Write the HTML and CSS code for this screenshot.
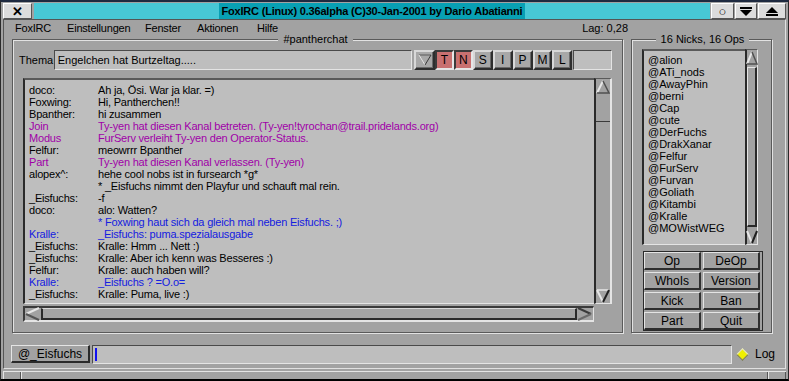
FILE: index.html
```html
<!DOCTYPE html>
<html lang="de">
<head>
    <meta charset="UTF-8">
    <title>FoxIRC</title>
    <link rel="stylesheet" href="styles.css">
</head>
<body>
<div class="window">
    <div class="titlebar">
        <span class="tb-btn close">✕</span>
        <div class="tb-title"><span>FoxIRC (Linux) 0.36alpha (C)30-Jan-2001 by Dario Abatianni</span></div>
        <span class="tb-btn circle">○</span>
        <span class="tb-btn mini">
            <svg width="12" height="9" viewBox="0 0 12 9"><rect x="0" y="0" width="12" height="2" fill="#000"/><polygon points="0,3 12,3 6,9" fill="#000"/></svg>
        </span>
        <span class="tb-btn maxi">
            <svg width="12" height="9" viewBox="0 0 12 9"><polygon points="6,0 12,6 0,6" fill="#000"/><rect x="0" y="7" width="12" height="2" fill="#000"/></svg>
        </span>
    </div>

    <div class="client">
        <div class="menubar">
            <span class="menu m1">FoxIRC</span>
            <span class="menu m2">Einstellungen</span>
            <span class="menu m3">Fenster</span>
            <span class="menu m4">Aktionen</span>
            <span class="menu m5">Hilfe</span>
            <span class="lag">Lag: 0,28</span>
        </div>

        <div class="main">
            <fieldset class="group channel">
                <legend>#pantherchat</legend>
                <div class="topic-row">
                    <span class="topic-label">Thema</span>
                    <div class="field topic">Engelchen hat Burtzeltag.....</div>
                    <span class="mode drop">
                        <svg width="14" height="12" viewBox="0 0 14 12"><polyline points="1,1 13,1" stroke="#5a5a5a" fill="none"/><polyline points="1,1 7,11" stroke="#e4e4e4" fill="none"/><polyline points="13,1 7,11" stroke="#3a3a3a" fill="none"/></svg>
                    </span>
                    <span class="mode on">T</span>
                    <span class="mode on">N</span>
                    <span class="mode">S</span>
                    <span class="mode">I</span>
                    <span class="mode">P</span>
                    <span class="mode">M</span>
                    <span class="mode">L</span>
                    <div class="field limit"></div>
                </div>

                <div class="chat">
                    <div class="log">
                        <span>doco:</span><span>Ah ja, Ösi. War ja klar. =)</span>
                        <span>Foxwing:</span><span>Hi, Pantherchen!!</span>
                        <span>Bpanther:</span><span>hi zusammen</span>
                        <span class="sys">Join</span><span class="sys">Ty-yen hat diesen Kanal betreten. (Ty-yen!tyrochan@trail.pridelands.org)</span>
                        <span class="sys">Modus</span><span class="sys">FurServ verleiht Ty-yen den Operator-Status.</span>
                        <span>Felfur:</span><span>meowrrr Bpanther</span>
                        <span class="sys">Part</span><span class="sys">Ty-yen hat diesen Kanal verlassen. (Ty-yen)</span>
                        <span>alopex^:</span><span>hehe cool nobs ist in fursearch *g*</span>
                        <span></span><span>* _Eisfuchs nimmt den Playfur und schauft mal rein.</span>
                        <span>_Eisfuchs:</span><span>-f</span>
                        <span>doco:</span><span>alo: Watten?</span>
                        <span></span><span class="me">* Foxwing haut sich da gleich mal neben Eisfuchs. ;)</span>
                        <span class="me">Kralle:</span><span class="me">_Eisfuchs: puma.spezialausgabe</span>
                        <span>_Eisfuchs:</span><span>Kralle: Hmm ... Nett :)</span>
                        <span>_Eisfuchs:</span><span>Kralle: Aber ich kenn was Besseres :)</span>
                        <span>Felfur:</span><span>Kralle: auch haben will?</span>
                        <span class="me">Kralle:</span><span class="me">_Eisfuchs ? =O.o=</span>
                        <span>_Eisfuchs:</span><span>Kralle: Puma, live :)</span>
                    </div>
                    <div class="vscroll">
                        <span class="arrow">
                            <svg width="14" height="14" viewBox="0 0 14 14"><polygon points="7,1 13,13 1,13" fill="#a2a2a2"/><polyline points="1,13 7,1" stroke="#e6e6e6" stroke-width="2" fill="none"/><polyline points="7,1 13,13 1,13" stroke="#505050" stroke-width="1.5" fill="none"/></svg>
                        </span>
                        <span class="thumb big"></span>
                        <span class="track"></span>
                        <span class="arrow">
                            <svg width="14" height="14" viewBox="0 0 14 14"><polygon points="1,1 13,1 7,13" fill="#a2a2a2"/><polyline points="1,1 13,1" stroke="#e6e6e6" stroke-width="1.5" fill="none"/><polyline points="1,1 7,13" stroke="#e6e6e6" stroke-width="2" fill="none"/><polyline points="13,1 7,13" stroke="#202020" stroke-width="2" fill="none"/></svg>
                        </span>
                    </div>
                    <div class="hscroll">
                        <span class="harrow">
                            <svg width="15" height="14" viewBox="0 0 15 14"><polygon points="1,7 14,1 14,13" fill="#a2a2a2"/><polyline points="14,1 1,7" stroke="#e6e6e6" stroke-width="2" fill="none"/><polyline points="1,7 14,13" stroke="#555" stroke-width="2" fill="none"/></svg>
                        </span>
                        <span class="hthumb"></span>
                        <span class="harrow">
                            <svg width="15" height="14" viewBox="0 0 15 14"><polygon points="1,1 14,7 1,13" fill="#a2a2a2"/><polyline points="1,1 14,7" stroke="#3a3a3a" stroke-width="2" fill="none"/><polyline points="14,7 1,13" stroke="#6a6a6a" stroke-width="2" fill="none"/></svg>
                        </span>
                    </div>
                </div>
            </fieldset>

            <fieldset class="group nicks">
                <legend>16 Nicks, 16 Ops</legend>
                <div class="nickbox">
                    <div class="nicklist">
                        <div>@alion</div>
                        <div>@ATi_nods</div>
                        <div>@AwayPhin</div>
                        <div>@berni</div>
                        <div>@Cap</div>
                        <div>@cute</div>
                        <div>@DerFuchs</div>
                        <div>@DrakXanar</div>
                        <div>@Felfur</div>
                        <div>@FurServ</div>
                        <div>@Furvan</div>
                        <div>@Goliath</div>
                        <div>@Kitambi</div>
                        <div>@Kralle</div>
                        <div>@MOWistWEG</div>
                    </div>
                    <div class="vscroll small">
                        <span class="arrow">
                            <svg width="12" height="14" viewBox="0 0 12 14"><polygon points="6,1 11,13 1,13" fill="#a2a2a2"/><polyline points="1,13 6,1" stroke="#e6e6e6" stroke-width="2" fill="none"/><polyline points="6,1 11,13 1,13" stroke="#505050" stroke-width="1.5" fill="none"/></svg>
                        </span>
                        <span class="thumb tall"></span>
                        <span class="arrow">
                            <svg width="12" height="14" viewBox="0 0 12 14"><polygon points="1,1 11,1 6,13" fill="#a2a2a2"/><polyline points="1,1 6,13" stroke="#e6e6e6" stroke-width="2" fill="none"/><polyline points="11,1 6,13" stroke="#202020" stroke-width="2" fill="none"/></svg>
                        </span>
                    </div>
                </div>
                <div class="actions">
                    <span class="btn">Op</span>
                    <span class="btn">DeOp</span>
                    <span class="btn">WhoIs</span>
                    <span class="btn">Version</span>
                    <span class="btn">Kick</span>
                    <span class="btn">Ban</span>
                    <span class="btn">Part</span>
                    <span class="btn">Quit</span>
                </div>
            </fieldset>
        </div>

        <div class="inputrow">
            <span class="btn nickbtn">@_Eisfuchs</span>
            <div class="field input"><span class="caret"></span></div>
            <span class="log-toggle"><span class="led"></span>Log</span>
        </div>
    </div>
    <div class="statusbar">
        <span class="grip"></span>
        <span class="grip-mid"></span>
        <span class="grip"></span>
    </div>
</div>
</body>
</html>
```

FILE: styles.css
```css
body {
    margin: 0;
    background: #000;
    font-family: "Liberation Sans", Arial, sans-serif;
    font-size: 11px;
    color: #000;
}
.window {
    width: 789px;
    height: 381px;
    box-sizing: border-box;
    background: #a2a2a2;
    border-top: 2px solid #1e2a40;
    border-left: 1px solid #2a2a2a;
    border-right: 1px solid #2a2a2a;
    border-bottom: 2px solid #000;
    display: flex;
    flex-direction: column;
    overflow: hidden;
}

/* title bar */
.titlebar {
    display: flex;
    height: 16px;
    margin: 1px 2px 0 2px;
    gap: 1px;
}
.tb-btn {
    flex-shrink: 0;
    background: #dcdcdc;
    border: 1px solid #fff;
    border-right-color: #555;
    border-bottom-color: #555;
    box-sizing: border-box;
    height: 16px;
    display: flex;
    align-items: center;
    justify-content: center;
    font-size: 13px;
    font-weight: bold;
}
.tb-btn.close { width: 29px; margin-right: 1px; }
.tb-btn.circle { width: 23px; font-size: 13px; font-weight: normal; }
.tb-btn.mini { width: 22px; }
.tb-btn.maxi { width: 28px; }
.tb-title {
    flex: 1;
    min-width: 0;
    display: flex;
    align-items: center;
    justify-content: center;
    background-color: #08a0b4;
    background-image: radial-gradient(circle, #4ccbd8 0.7px, transparent 0.8px);
    background-size: 2px 2px;
    font-weight: bold;
    font-size: 11px;
    white-space: nowrap;
}
.tb-title span {
    background: #08a0b4;
    padding: 0 3px;
    line-height: 16px;
    letter-spacing: -0.2px;
}

/* client area */
.client {
    flex: 1;
    margin: 0 2px 0 2px;
    border: 1px solid #555;
    border-bottom-color: #e0e0e0;
    border-right-color: #e0e0e0;
    display: flex;
    flex-direction: column;
    padding: 0 6px 0 8px;
}
.menubar {
    display: flex;
    height: 16px;
    align-items: center;
    padding-left: 3px;
    letter-spacing: -0.2px;
}
.m1 { width: 52px; }
.m2 { width: 78px; }
.m3 { width: 52px; }
.m4 { width: 60px; }
.lag { margin-left: auto; margin-right: 151px; letter-spacing: 0; }

.main {
    display: flex;
    gap: 8px;
    height: 300px;
    margin-top: -3px;
}
.group {
    margin: 0;
    padding: 0;
    border: 1px solid #5a5a5a;
    box-shadow: inset 1px 1px 0 #e2e2e2, 1px 1px 0 #e2e2e2;
    min-width: 0;
}
.group legend {
    margin: 0 auto;
    padding: 0 5px;
    background: #a2a2a2;
    line-height: 12px;
    font-size: 11px;
}
.channel {
    width: 611px;
    box-sizing: border-box;
    padding: 0 10px 0 6px;
}
.nicks {
    width: 141px;
    box-sizing: border-box;
    padding: 0 8px 0 10px;
}

/* topic row */
.topic-row {
    display: flex;
    align-items: center;
    height: 20px;
    margin-top: 5px;
}
.topic-label { width: 35px; }
.field {
    background: #bebebe;
    border: 1px solid #4a4a4a;
    border-right-color: #e4e4e4;
    border-bottom-color: #e4e4e4;
    box-sizing: border-box;
}
.topic {
    width: 361px;
    height: 20px;
    padding-left: 3px;
    line-height: 18px;
}
.limit {
    width: 39px;
    height: 20px;
    margin-left: 1px;
}
.mode {
    width: 20px;
    height: 20px;
    box-sizing: border-box;
    display: flex;
    align-items: center;
    justify-content: center;
    background: #a8a8a8;
    border: 2px solid #2e2e2e;
    border-top-color: #d8d8d8;
    border-left-color: #d8d8d8;
    box-shadow: inset -1px -1px 0 #6a6a6a;
    font-size: 12px;
}
.mode.drop {
    width: 21px;
    margin-left: 2px;
}
.mode.on {
    width: 19px;
    background: #c87070;
    border-color: #3a3a3a;
    border-right-color: #e6e6e6;
    border-bottom-color: #e6e6e6;
    box-shadow: none;
}

/* chat */
.chat {
    display: grid;
    grid-template-columns: 571px 18px;
    grid-template-rows: 226px 18px;
    margin: 8px 0 0 4px;
}
.log {
    background: #bebebe;
    border-top: 2px solid #5a5a5a;
    border-left: 2px solid #2a2a2a;
    border-bottom: 1px solid #e4e4e4;
    display: grid;
    grid-template-columns: 69px 1fr;
    grid-auto-rows: 12px;
    padding: 4px 0 0 4px;
    line-height: 12px;
    overflow: hidden;
    white-space: nowrap;
    letter-spacing: -0.2px;
}
.log .sys { color: #a000a8; }
.log .me { color: #1420e0; }

.vscroll {
    background: #a2a2a2;
    border-left: 2px solid #2a2a2a;
    border-right: 2px solid #e4e4e4;
    border-top: 1px solid #5a5a5a;
    border-bottom: 1px solid #e4e4e4;
    display: flex;
    flex-direction: column;
    align-items: center;
}
.vscroll .arrow { height: 15px; display: flex; align-items: center; }
.vscroll .thumb.big {
    width: 100%;
    height: 27px;
    border-bottom: 1px solid #3a3a3a;
}
.vscroll .track { flex: 1; }
.hscroll {
    display: flex;
    align-items: center;
    margin-top: 2px;
    background: #a2a2a2;
    border-top: 2px solid #3a3a3a;
    border-left: 2px solid #3a3a3a;
    border-bottom: 2px solid #e4e4e4;
    border-right: 1px solid #e4e4e4;
}
.harrow { width: 16px; display: flex; align-items: center; }
.hthumb {
    flex: 1;
    height: 12px;
    border-left: 2px solid #2a2a2a;
    border-right: 2px solid #2a2a2a;
    border-top: 1px solid #d8d8d8;
    border-bottom: 2px solid #2a2a2a;
    box-sizing: border-box;
    background: #a4a4a4;
}

/* nick list */
.nickbox {
    display: flex;
    height: 196px;
    margin-top: 4px;
}
.nicklist {
    width: 103px;
    box-sizing: border-box;
    background: #bebebe;
    border-left: 2px solid #2a2a2a;
    border-top: 2px solid #5a5a5a;
    border-bottom: 1px solid #e4e4e4;
    padding: 3px 0 0 4px;
    line-height: 12px;
    overflow: hidden;
}
.vscroll.small {
    width: 13px;
    border-left-width: 2px;
    border-right-width: 1px;
    box-sizing: border-box;
}
.vscroll.small .thumb.tall {
    flex: 1;
    width: 100%;
    margin: 2px 0;
    box-sizing: border-box;
    border-top: 1px solid #e4e4e4;
    border-left: 1px solid #e4e4e4;
    border-right: 2px solid #2a2a2a;
    border-bottom: 2px solid #2a2a2a;
}

.actions {
    display: grid;
    grid-template-columns: 57px 57px;
    gap: 2px;
    margin: 6px 0 0 1px;
    width: 118px;
    border: 1px solid #2a2a2a;
    box-sizing: content-box;
}
.btn {
    height: 18px;
    box-sizing: border-box;
    display: flex;
    align-items: center;
    justify-content: center;
    background: #a2a2a2;
    border: 2px solid #2e2e2e;
    border-top: 1px solid #e4e4e4;
    border-left: 1px solid #e4e4e4;
    font-size: 12px;
}

/* input row */
.inputrow {
    display: flex;
    align-items: center;
    height: 20px;
    margin-top: 11px;
}
.nickbtn {
    width: 79px;
    height: 18px;
    margin-left: -1px;
    border-color: #2a2a2a;
    border-top: 1px solid #e4e4e4;
    border-left: 1px solid #e4e4e4;
}
.input {
    width: 640px;
    height: 19px;
    margin-left: 2px;
    display: flex;
    align-items: center;
    padding-left: 2px;
}
.caret {
    width: 2px;
    height: 13px;
    background: #1010f0;
}
.log-toggle {
    display: flex;
    align-items: center;
    margin-left: 6px;
    font-size: 12px;
}
.led {
    width: 7px;
    height: 7px;
    background: #f0f000;
    border: 1px solid #707070;
    border-top-color: #e0e0e0;
    border-left-color: #e0e0e0;
    transform: rotate(45deg);
    margin-right: 8px;
}

.statusbar {
    height: 7px;
    display: flex;
    margin: 2px 2px 0 2px;
    border-top: 1px solid #e4e4e4;
}
.grip { width: 16px; border-right: 1px solid #555; border-left: 1px solid #e4e4e4; }
.grip-mid { flex: 1; border-left: 1px solid #e4e4e4; border-right: 1px solid #555; }
```
